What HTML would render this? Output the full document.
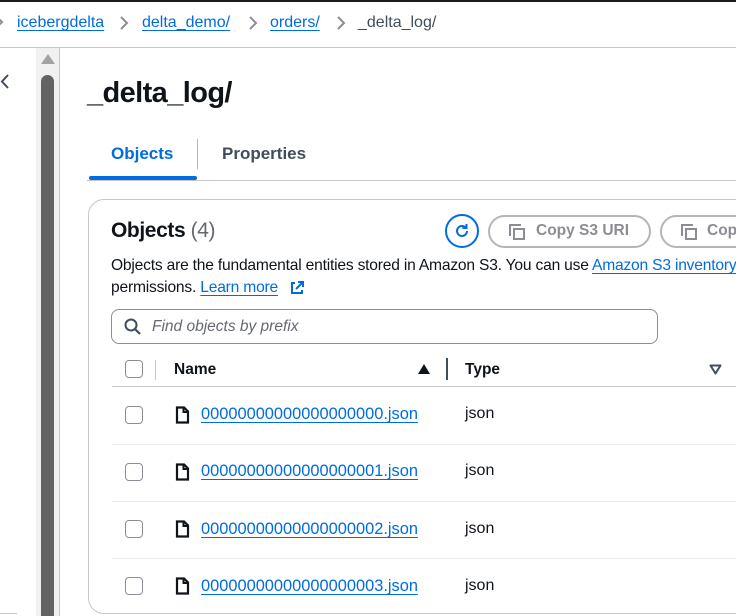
<!DOCTYPE html>
<html><head><style>
*{margin:0;padding:0;box-sizing:border-box}
body{width:736px;height:616px;overflow:hidden;background:#fff;font-family:"Liberation Sans",sans-serif;color:#0f141a;position:relative}
.a{position:absolute;white-space:nowrap}
.lnk{color:#006ce0;text-decoration:underline;text-underline-offset:3px}
.cb{position:absolute;width:18px;height:18px;border:1.5px solid #8c8c94;border-radius:4px;background:#fff}
.row{position:absolute;left:112px;width:624px;height:1px;background:#e9ebed}
.btn{position:absolute;height:33px;border:2px solid #b4b4bb;border-radius:17px;color:#8c8c94;font-weight:bold;font-size:15px}
.chev{position:absolute}
</style></head><body>
<div class="a" style="left:0;top:0;width:736px;height:2px;background:#1b1b1b"></div>
<svg class="chev" style="left:-4px;top:17px" width="8" height="10" viewBox="0 0 8 10"><path d="M2 1l4 4-4 4" fill="none" stroke="#8c8c94" stroke-width="2"/></svg>
<div class="a lnk" style="left:17px;top:14px;font-size:16px">icebergdelta</div>
<svg class="chev" style="left:119px;top:16px" width="10" height="14" viewBox="0 0 10 14"><path d="M2 1l6 6-6 6" fill="none" stroke="#8c8c94" stroke-width="2"/></svg>
<div class="a lnk" style="left:142px;top:14px;font-size:16px">delta_demo/</div>
<svg class="chev" style="left:248px;top:16px" width="10" height="14" viewBox="0 0 10 14"><path d="M2 1l6 6-6 6" fill="none" stroke="#8c8c94" stroke-width="2"/></svg>
<div class="a lnk" style="left:270px;top:14px;font-size:16px">orders/</div>
<svg class="chev" style="left:336px;top:16px" width="10" height="14" viewBox="0 0 10 14"><path d="M2 1l6 6-6 6" fill="none" stroke="#8c8c94" stroke-width="2"/></svg>
<div class="a" style="left:358px;top:14px;font-size:16px;color:#414d5c">_delta_log/</div>
<div class="a" style="left:0;top:47px;width:736px;height:1px;background:#c6c6cd"></div>
<div class="a" style="left:36px;top:48px;width:23px;height:568px;background:#f1f1f1"></div>
<div class="a" style="left:41px;top:54px;width:0;height:0;border-left:7px solid transparent;border-right:7px solid transparent;border-bottom:10px solid #a3a3a3"></div>
<div class="a" style="left:41px;top:75px;width:13px;height:541px;background:#636363;border-radius:7px 7px 0 0"></div>
<div class="a" style="left:59px;top:48px;width:1px;height:568px;background:#c6c6cd"></div>
<svg class="a" style="left:0;top:74px" width="10" height="15" viewBox="0 0 10 15"><path d="M8 1L2 7.5 8 14" fill="none" stroke="#414d5c" stroke-width="2"/></svg>
<div class="a" style="left:0;top:613px;width:17px;height:1px;background:#c6c6cd"></div>
<div class="a" style="left:87px;top:77px;font-size:29px;font-weight:bold;letter-spacing:-0.6px">_delta_log/</div>
<div class="a" style="left:111px;top:144px;font-size:17px;font-weight:bold;color:#006ce0">Objects</div>
<div class="a" style="left:197px;top:139px;width:1px;height:30px;background:#b4b4bb"></div>
<div class="a" style="left:222px;top:144px;font-size:17px;font-weight:bold;color:#414d5c">Properties</div>
<div class="a" style="left:87px;top:180px;width:649px;height:1px;background:#c6c6cd"></div>
<div class="a" style="left:89px;top:176px;width:108px;height:4px;background:#006ce0;border-radius:2px"></div>
<div class="a" style="left:88px;top:199px;width:680px;height:415px;border:1px solid #c6c6cd;border-radius:16px"></div>
<div class="a" style="left:111px;top:219px;font-size:21px;font-weight:bold;letter-spacing:-0.4px">Objects <span style="font-weight:normal;color:#656871">(4)</span></div>
<div class="a" style="left:445px;top:214px;width:34px;height:34px;border:2px solid #006ce0;border-radius:50%"></div>
<svg class="a" style="left:452px;top:221px" width="20" height="20" viewBox="0 0 20 20"><path d="M15 10a5 5 0 1 1-1.5-3.6" fill="none" stroke="#006ce0" stroke-width="2"/><path d="M14.5 3v4h-4" fill="none" stroke="#006ce0" stroke-width="2"/></svg>
<div class="btn" style="left:488px;top:215px;width:163px"></div>
<svg class="a" style="left:507px;top:222px" width="20" height="20" viewBox="0 0 20 20"><path d="M3 14V3h11" fill="none" stroke="#8c8c94" stroke-width="2"/><rect x="7" y="7" width="10" height="10" fill="none" stroke="#8c8c94" stroke-width="2"/></svg>
<div class="a" style="left:536px;top:222px;font-size:15.5px;font-weight:bold;color:#8c8c94">Copy S3 URI</div>
<div class="btn" style="left:660px;top:215px;width:120px"></div>
<svg class="a" style="left:679px;top:222px" width="20" height="20" viewBox="0 0 20 20"><path d="M3 14V3h11" fill="none" stroke="#8c8c94" stroke-width="2"/><rect x="7" y="7" width="10" height="10" fill="none" stroke="#8c8c94" stroke-width="2"/></svg>
<div class="a" style="left:707px;top:222px;font-size:15.5px;font-weight:bold;color:#8c8c94">Copy</div>
<div class="a" style="left:111px;top:257px;font-size:15.6px;letter-spacing:-0.2px;color:#0f141a">Objects are the fundamental entities stored in Amazon S3. You can use <span class="lnk">Amazon S3 inventory</span></div>
<div class="a" style="left:111px;top:279px;font-size:15.6px;letter-spacing:-0.2px">permissions. <span class="lnk">Learn more</span></div>
<svg class="a" style="left:289px;top:280px" width="16" height="16" viewBox="0 0 16 16"><path d="M6 3H3v10h10v-3M9 2h5v5M14 2L7 9" fill="none" stroke="#006ce0" stroke-width="2"/></svg>
<div class="a" style="left:111px;top:309px;width:547px;height:35px;border:1.5px solid #8c8c94;border-radius:8px"></div>
<svg class="a" style="left:123px;top:317px" width="19" height="19" viewBox="0 0 19 19"><circle cx="8" cy="8" r="5.5" fill="none" stroke="#414d5c" stroke-width="2"/><path d="M12 12l5 5" stroke="#414d5c" stroke-width="2.2"/></svg>
<div class="a" style="left:152px;top:318px;font-size:15.5px;font-style:italic;color:#656871">Find objects by prefix</div>
<div class="cb" style="left:125px;top:360px"></div>
<div class="a" style="left:155px;top:360px;width:1px;height:20px;background:#c6c6cd"></div>
<div class="a" style="left:174px;top:361px;font-size:15.5px;font-weight:bold">Name</div>
<div class="a" style="left:418px;top:364px;width:0;height:0;border-left:6px solid transparent;border-right:6px solid transparent;border-bottom:10px solid #0f141a"></div>
<div class="a" style="left:446px;top:358px;width:2px;height:22px;background:#414d5c"></div>
<div class="a" style="left:465px;top:361px;font-size:15.5px;font-weight:bold">Type</div>
<svg class="a" style="left:709px;top:364px" width="13" height="11" viewBox="0 0 13 11"><path d="M1.5 1.5h10L6.5 9.5z" fill="none" stroke="#414d5c" stroke-width="2" stroke-linejoin="round"/></svg>
<div class="a" style="left:112px;top:386px;width:624px;height:1px;background:#c6c6cd"></div>

<div class="cb" style="left:125px;top:406px"></div>
<svg class="a" style="left:175px;top:406px" width="15" height="18" viewBox="0 0 15 18"><path d="M2 1.5h7l4 4V16.5H2z" fill="none" stroke="#0f141a" stroke-width="2.2"/><path d="M8.5 2v4h4" fill="none" stroke="#0f141a" stroke-width="2"/></svg>
<div class="a lnk" style="left:201px;top:405px;font-size:16.4px">00000000000000000000.json</div>
<div class="a" style="left:465px;top:405px;font-size:16px">json</div>
<div class="row" style="top:444px"></div>

<div class="cb" style="left:125px;top:463px"></div>
<svg class="a" style="left:175px;top:463px" width="15" height="18" viewBox="0 0 15 18"><path d="M2 1.5h7l4 4V16.5H2z" fill="none" stroke="#0f141a" stroke-width="2.2"/><path d="M8.5 2v4h4" fill="none" stroke="#0f141a" stroke-width="2"/></svg>
<div class="a lnk" style="left:201px;top:462px;font-size:16.4px">00000000000000000001.json</div>
<div class="a" style="left:465px;top:462px;font-size:16px">json</div>
<div class="row" style="top:501px"></div>

<div class="cb" style="left:125px;top:520px"></div>
<svg class="a" style="left:175px;top:520px" width="15" height="18" viewBox="0 0 15 18"><path d="M2 1.5h7l4 4V16.5H2z" fill="none" stroke="#0f141a" stroke-width="2.2"/><path d="M8.5 2v4h4" fill="none" stroke="#0f141a" stroke-width="2"/></svg>
<div class="a lnk" style="left:201px;top:520px;font-size:16.4px">00000000000000000002.json</div>
<div class="a" style="left:465px;top:520px;font-size:16px">json</div>
<div class="row" style="top:558px"></div>

<div class="cb" style="left:125px;top:577px"></div>
<svg class="a" style="left:175px;top:577px" width="15" height="18" viewBox="0 0 15 18"><path d="M2 1.5h7l4 4V16.5H2z" fill="none" stroke="#0f141a" stroke-width="2.2"/><path d="M8.5 2v4h4" fill="none" stroke="#0f141a" stroke-width="2"/></svg>
<div class="a lnk" style="left:201px;top:577px;font-size:16.4px">00000000000000000003.json</div>
<div class="a" style="left:465px;top:577px;font-size:16px">json</div>
</body></html>
